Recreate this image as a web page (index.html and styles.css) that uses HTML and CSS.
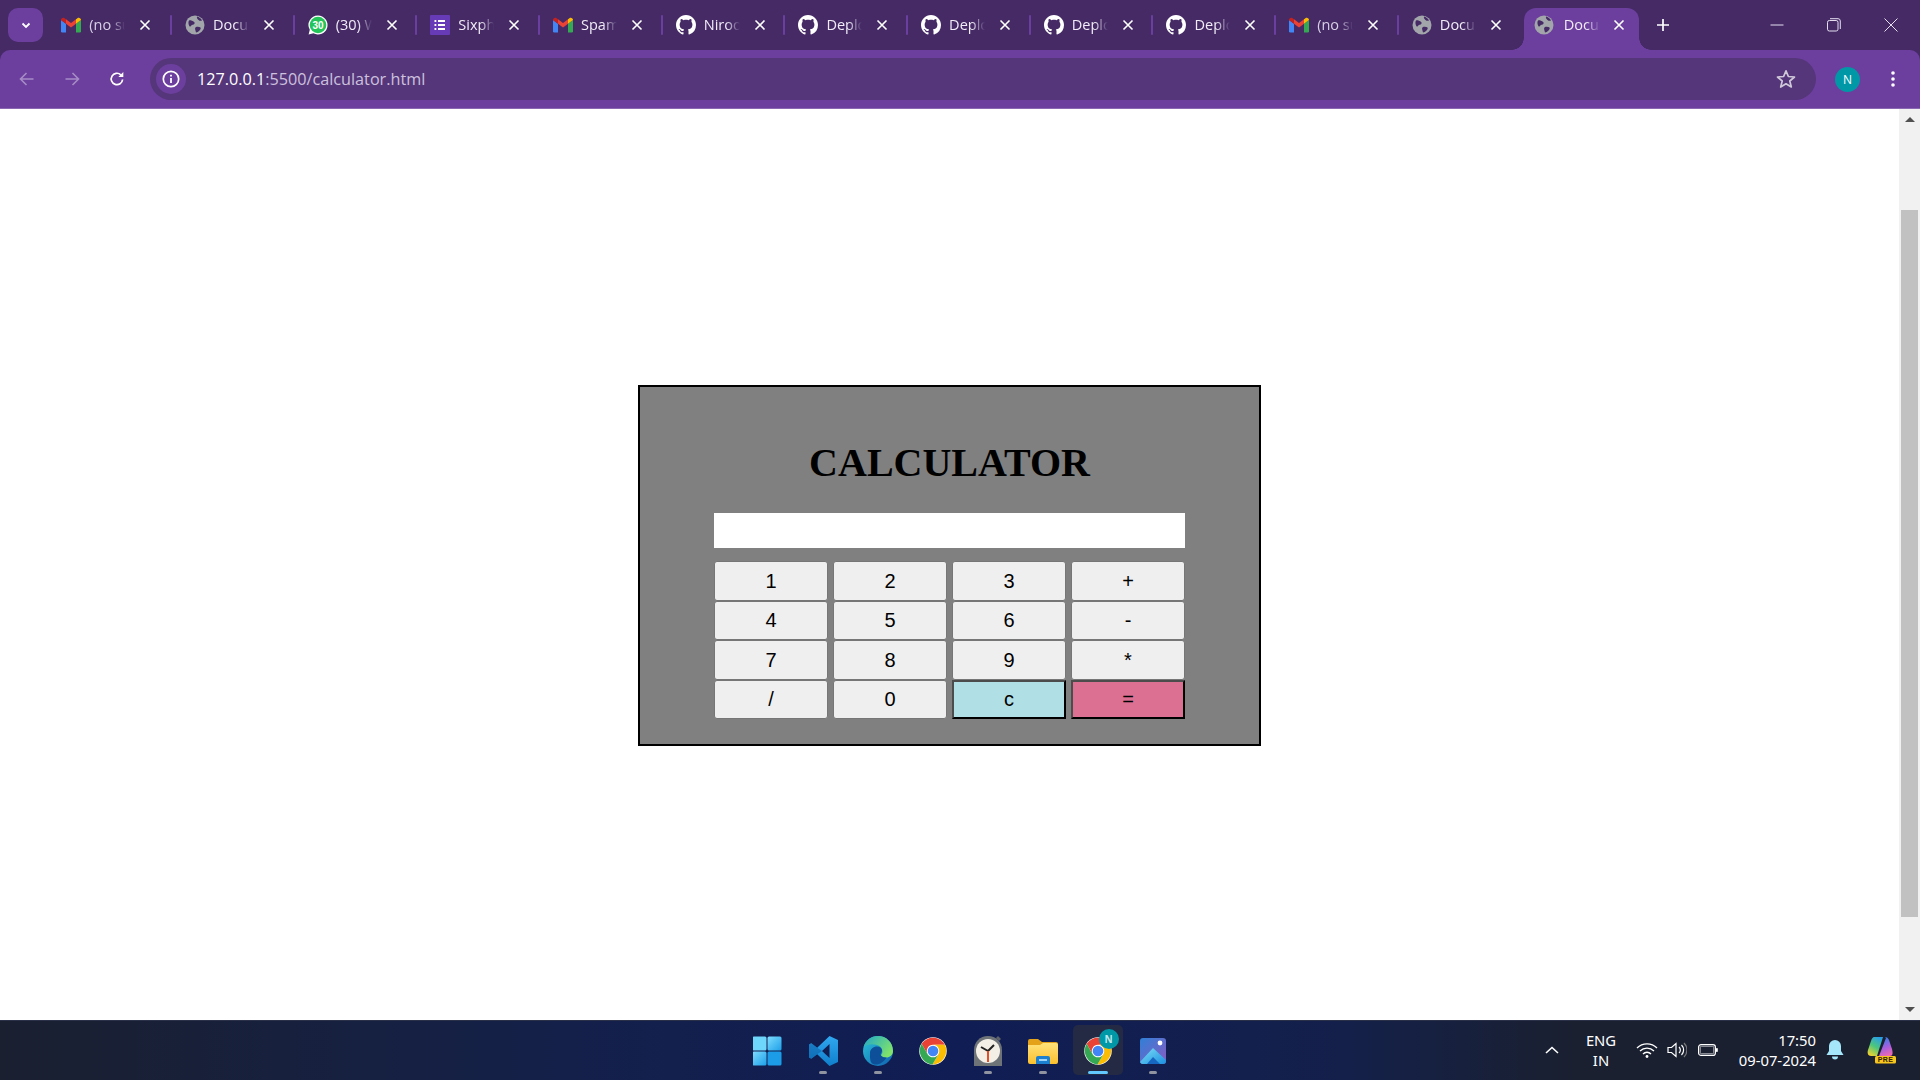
FILE: index.html
```html
<!DOCTYPE html>
<html lang="en">
<head>
<meta charset="utf-8">
<title>Document</title>
<link rel="stylesheet" href="styles.css">
</head>
<body>
<svg class="sprite" aria-hidden="true">
  <defs>
    <linearGradient id="vsg" x1="0" y1="0" x2="0" y2="1"><stop offset="0" stop-color="#31a8f0"/><stop offset="1" stop-color="#0f7fcc"/></linearGradient>
    <linearGradient id="wing" x1="0" y1="0" x2="1" y2="1"><stop offset="0" stop-color="#7ddcff"/><stop offset="1" stop-color="#1da0e8"/></linearGradient>
    <linearGradient id="edg" x1="0" y1="0" x2="1" y2="1"><stop offset="0" stop-color="#2bc4d8"/><stop offset="1" stop-color="#0f5fb0"/></linearGradient>
    <linearGradient id="edg2" x1="0" y1="0" x2="1" y2="0.6"><stop offset="0" stop-color="#1fa6c9"/><stop offset="1" stop-color="#7fe36b"/></linearGradient>
    <linearGradient id="folg" x1="0" y1="0" x2="0" y2="1"><stop offset="0" stop-color="#ffe27a"/><stop offset="1" stop-color="#fcc02e"/></linearGradient>
    <linearGradient id="phog" x1="0" y1="0" x2="1" y2="1"><stop offset="0" stop-color="#2f80d8"/><stop offset="1" stop-color="#8a5bc0"/></linearGradient>
    <linearGradient id="mtg" x1="0" y1="0" x2="1" y2="1"><stop offset="0" stop-color="#7fe0f8"/><stop offset="1" stop-color="#1b8fe0"/></linearGradient>
    <linearGradient id="cop1" x1="0.2" y1="1" x2="0.7" y2="0"><stop offset="0" stop-color="#f4d22e"/><stop offset="0.5" stop-color="#4cc77c"/><stop offset="1" stop-color="#2a9fe6"/></linearGradient>
    <linearGradient id="cop2" x1="0.4" y1="0" x2="0.7" y2="1"><stop offset="0" stop-color="#2f7fe8"/><stop offset="0.55" stop-color="#a85fdc"/><stop offset="1" stop-color="#f06ab0"/></linearGradient>
    <symbol id="gm" viewBox="0 0 24 18">
      <path fill="#4285f4" d="M0 16.5V3l6 4.500V18H1.500A1.500 1.500 0 0 1 0 16.500Z"/>
      <path fill="#34a853" d="M18 18V7.500L24 3v13.500a1.500 1.500 0 0 1-1.500 1.500Z"/>
      <path fill="#ea4335" d="M6 7.500 12 12l6-4.500V2l-6 4.500L6 2Z"/>
      <path fill="#c5221f" d="M0 3C0 .8 2.500-.5 4.300.8L6 2v5.500Z"/>
      <path fill="#fbbc04" d="M18 2 19.700.8C21.500-.5 24 .8 24 3l-6 4.500Z"/>
    </symbol>
    <symbol id="gl" viewBox="0 0 20 20">
      <circle cx="10" cy="10" r="9.500" fill="#a2a6ab"/>
      <path fill="#452a66" d="M4 5.500c2-.5 3 .5 4.500 1 1 .5 1.500 1.500.8 2.500-.8 1-2.300.5-3 1.500-.4 1-1.300 1.500-2 .5C3.500 9.500 3 7 4 5.500ZM12 1.500c2 .5 4 2 5 4-1 .5-2.500.5-3.500-.5-1-.8-2-2-1.500-3.500ZM11 12c1.500-.5 3.500-.3 4.500.5.500 1 0 2-1 3-1 1-2.500 2-3.500 2-.5-1-.3-2-.8-3-.3-1 0-2 .8-2.500Z"/>
    </symbol>
    <symbol id="gh" viewBox="0 0 16 16">
      <path fill="#fff" fill-rule="evenodd" d="M8 0C3.580 0 0 3.580 0 8c0 3.540 2.290 6.530 5.470 7.590.4.070.55-.17.55-.38 0-.19-.01-.82-.01-1.490-2.010.37-2.530-.49-2.690-.94-.09-.23-.48-.94-.82-1.130-.28-.15-.68-.52-.01-.53.63-.01 1.080.58 1.230.82.720 1.210 1.870.87 2.330.66.070-.52.28-.87.51-1.070-1.780-.2-3.640-.89-3.640-3.950 0-.87.31-1.590.82-2.150-.08-.2-.36-1.020.08-2.120 0 0 .67-.21 2.200.82.64-.18 1.320-.27 2-.27.68 0 1.360.09 2 .27 1.530-1.040 2.200-.82 2.200-.82.44 1.100.16 1.920.08 2.120.51.56.82 1.270.82 2.150 0 3.070-1.870 3.750-3.650 3.950.29.25.54.73.54 1.480 0 1.070-.01 1.930-.01 2.200 0 .21.15.46.55.38A8.013 8.013 0 0 0 16 8c0-4.420-3.580-8-8-8z"/>
    </symbol>
    <symbol id="x" viewBox="0 0 12 12">
      <path d="M1.500 1.500l9 9M10.500 1.500l-9 9" stroke="#fff" stroke-width="1.600" fill="none"/>
    </symbol>
    <symbol id="chrome" viewBox="0 0 48 48">
      <circle cx="24" cy="24" r="22" fill="#fff"/>
      <path fill="#ea4335" d="M24 14H43.050A22 22 0 0 0 5.810 12.500L15.340 29A10 10 0 0 1 24 14Z"/>
      <path fill="#fbbc04" d="M32.660 29 23.135 45.500A22 22 0 0 0 43.050 14H24A10 10 0 0 1 32.660 29Z"/>
      <path fill="#34a853" d="M15.340 29 5.810 12.500A22 22 0 0 0 23.135 45.500L32.660 29A10 10 0 0 1 15.340 29Z"/>
      <circle cx="24" cy="24" r="8.500" fill="#4285f4"/>
    </symbol>
  </defs>
</svg>

<header class="browser">
  <div class="tabstrip">
    <div class="tabsearch">
      <svg class="ico12" viewBox="0 0 12 12"><path d="M2.500 4.500 6 8l3.500-3.500" stroke="#fff" stroke-width="1.800" fill="none"/></svg>
    </div>
    <div class="tab first"><span class="sep"></span><svg class="fav gm"><use href="#gm"/></svg><span class="label dim">(no subject)</span><svg class="close"><use href="#x"/></svg></div>
    <div class="tab"><span class="sep"></span><svg class="fav"><use href="#gl"/></svg><span class="label">Document</span><svg class="close"><use href="#x"/></svg></div>
    <div class="tab"><span class="sep"></span>
      <svg class="fav" viewBox="0 0 20 20">
        <path fill="#fff" d="M10 .5a9.500 9.500 0 0 0-8.200 14.300L.6 19.500l4.800-1.200A9.500 9.500 0 1 0 10 .5Z"/>
        <circle cx="10" cy="10" r="8.300" fill="#25c45a"/>
        <text class="wa-num" x="10" y="13.600" text-anchor="middle">30</text>
      </svg>
      <span class="label">(30) WhatsApp</span><svg class="close"><use href="#x"/></svg></div>
    <div class="tab"><span class="sep"></span>
      <svg class="fav" viewBox="0 0 20 20">
        <rect width="20" height="20" rx="1" fill="#673ab7"/>
        <path d="M8 6h7M8 10h7M8 14h7" stroke="#fff" stroke-width="1.800"/>
        <path d="M4.500 6h1.800M4.500 10h1.800M4.500 14h1.800" stroke="#fff" stroke-width="1.800"/>
      </svg>
      <span class="label">Sixphrase</span><svg class="close"><use href="#x"/></svg></div>
    <div class="tab"><span class="sep"></span><svg class="fav gm"><use href="#gm"/></svg><span class="label">Spam</span><svg class="close"><use href="#x"/></svg></div>
    <div class="tab"><span class="sep"></span><svg class="fav"><use href="#gh"/></svg><span class="label">Niroop</span><svg class="close"><use href="#x"/></svg></div>
    <div class="tab"><span class="sep"></span><svg class="fav"><use href="#gh"/></svg><span class="label">Deploy</span><svg class="close"><use href="#x"/></svg></div>
    <div class="tab"><span class="sep"></span><svg class="fav"><use href="#gh"/></svg><span class="label">Deploy</span><svg class="close"><use href="#x"/></svg></div>
    <div class="tab"><span class="sep"></span><svg class="fav"><use href="#gh"/></svg><span class="label">Deploy</span><svg class="close"><use href="#x"/></svg></div>
    <div class="tab"><span class="sep"></span><svg class="fav"><use href="#gh"/></svg><span class="label">Deploy</span><svg class="close"><use href="#x"/></svg></div>
    <div class="tab"><span class="sep"></span><svg class="fav gm"><use href="#gm"/></svg><span class="label dim">(no subject)</span><svg class="close"><use href="#x"/></svg></div>
    <div class="tab"><span class="sep"></span><svg class="fav"><use href="#gl"/></svg><span class="label">Document</span><svg class="close"><use href="#x"/></svg></div>
    <div class="tab active"><svg class="fav"><use href="#gl"/></svg><span class="label">Document</span><svg class="close"><use href="#x"/></svg></div>
    <svg class="newtab" viewBox="0 0 14 14"><path d="M7 1v12M1 7h12" stroke="#fff" stroke-width="1.700"/></svg>
    <div class="winctl">
      <div class="winbtn"><svg class="ico14" viewBox="0 0 14 14"><path d="M.5 7h13" stroke="#e6deef" stroke-width="1"/></svg></div>
      <div class="winbtn"><svg class="ico14" viewBox="0 0 14 14"><rect x=".5" y="2.500" width="10.500" height="10.500" rx="1.800" fill="none" stroke="#e6deef"/><path d="M3 .7h8a2.300 2.300 0 0 1 2.300 2.300v8" fill="none" stroke="#e6deef"/></svg></div>
      <div class="winbtn"><svg class="ico14" viewBox="0 0 14 14"><path d="M.5.500l13 13M13.500.500l-13 13" stroke="#e6deef" stroke-width="1"/></svg></div>
    </div>
  </div>
  <div class="toolbar">
    <svg class="nav back" viewBox="0 0 16 16"><path d="M14.500 8h-13M7.500 2 1.500 8l6 6" stroke="#a68cc6" stroke-width="1.600" fill="none"/></svg>
    <svg class="nav fwd" viewBox="0 0 16 16"><path d="M1.500 8h13M8.500 2l6 6-6 6" stroke="#a68cc6" stroke-width="1.600" fill="none"/></svg>
    <svg class="nav reload" viewBox="0 0 16 16"><path d="M13.600 8.500A5.700 5.700 0 1 1 11.800 3.800" stroke="#fff" stroke-width="1.700" fill="none"/><path d="M14.300 1v5h-5Z" fill="#fff"/></svg>
    <div class="omnibox">
      <div class="chip">
        <svg class="ico18" viewBox="0 0 18 18"><circle cx="9" cy="9" r="7.700" fill="none" stroke="#fff" stroke-width="1.700"/><path d="M9 8v5M9 4.800v1.800" stroke="#fff" stroke-width="1.800"/></svg>
      </div>
      <span class="url"><span class="host">127.0.0.1</span>:5500/calculator.html</span>
      <svg class="star" viewBox="0 0 20 20"><path d="M10 1.800l2.400 5.700 6.100.5-4.700 4 1.500 6-5.300-3.200L4.700 18l1.500-6-4.700-4 6.100-.5Z" fill="none" stroke="#cfc8d8" stroke-width="1.700" stroke-linejoin="round"/></svg>
    </div>
    <div class="avatar">N</div>
    <svg class="kebab" viewBox="0 0 4 18"><circle cx="2" cy="3" r="1.800" fill="#fff"/><circle cx="2" cy="9" r="1.800" fill="#fff"/><circle cx="2" cy="15" r="1.800" fill="#fff"/></svg>
  </div>
</header>

<div class="viewport">
  <main class="page">
    <section class="calc">
      <h1 class="calc-title">CALCULATOR</h1>
      <input class="calc-display" type="text" aria-label="display">
      <div class="keys">
        <button class="key">1</button><button class="key">2</button><button class="key">3</button><button class="key">+</button>
        <button class="key">4</button><button class="key">5</button><button class="key">6</button><button class="key">-</button>
        <button class="key">7</button><button class="key">8</button><button class="key">9</button><button class="key">*</button>
        <button class="key">/</button><button class="key">0</button><button class="key key-clear">c</button><button class="key key-equal">=</button>
      </div>
    </section>
  </main>
  <aside class="scrollbar">
    <div class="sb-arrow"><span class="tri-up"></span></div>
    <div class="sb-track"><div class="sb-thumb"></div></div>
    <div class="sb-arrow"><span class="tri-down"></span></div>
  </aside>
</div>

<footer class="taskbar">
  <div class="tb-side"></div>
  <div class="tb-apps">
    <div class="slot">
      <svg class="appicon" viewBox="0 0 30 30"><rect x="-.5" y=".5" width="14" height="14" rx="1.500" fill="#6fd6fb"/><rect x="14.500" y=".5" width="14" height="14" rx="1.500" fill="url(#wing)"/><rect x="-.5" y="15.500" width="14" height="14" rx="1.500" fill="url(#wing)"/><rect x="14.500" y="15.500" width="14" height="14" rx="1.500" fill="#1c9be6"/></svg>
    </div>
    <div class="slot">
      <svg class="appicon" viewBox="0 0 30 30"><path fill="url(#vsg)" fill-rule="evenodd" d="M21.500 0 30 4v22l-8.500 4L9.200 18.200 3.300 22.800 1 21.500V8.500l2.300-1.300 5.900 4.600ZM21.500 8 14 15l7.500 7Z"/><path fill="#0b5fa5" d="M3.300 7.200 1 8.500v13l2.300 1.300 5.900-4.600L14 15 9.200 11.800Z" opacity=".55"/></svg>
      <span class="pip"></span>
    </div>
    <div class="slot">
      <svg class="appicon" viewBox="0 0 30 30"><circle cx="15" cy="15" r="15" fill="url(#edg)"/><path fill="url(#edg2)" d="M15 0c8 0 15 6 15 15 0 4-3 6.500-7 6.500-3 0-5-1-5-2.500 2-1.500 2-6-1-8.500C12 7 4 8 .6 11 2.500 4.500 8 0 15 0Z"/><path fill="#0e4f9a" d="M7 17c0-4 3.500-6.500 7-6.500 3 0 5 2 5 4 0 1.500-1 2.500-1.500 3.500 0 2.500 3 4 6 3.500-2.500 4.500-7 7.500-12 7-5-1-4.500-6.500-4.500-11.500Z"/></svg>
      <span class="pip"></span>
    </div>
    <div class="slot">
      <svg class="appicon"><use href="#chrome"/></svg>
    </div>
    <div class="slot">
      <svg class="appicon" viewBox="0 0 30 30"><path fill="#5f6368" d="M25 0l3 3-2 2-3-3Z"/><path fill="#6e7378" d="M15 0C7 0 1 6 1 14v16h28V14C29 6 23 0 15 0Z"/><circle cx="15" cy="15" r="12" fill="#f3efe6"/><path d="M15 15 8 11M15 15l6-6" stroke="#222" stroke-width="2" fill="none"/><path d="M15 15v11" stroke="#e0502a" stroke-width="2"/></svg>
      <span class="pip"></span>
    </div>
    <div class="slot">
      <svg class="appicon" viewBox="0 0 30 30"><path fill="#e3a21a" d="M0 5a2 2 0 0 1 2-2h8l4 3h14a2 2 0 0 1 2 2v4H0Z"/><path fill="url(#folg)" d="M0 9h12l3-2h13a2 2 0 0 1 2 2v17a2 2 0 0 1-2 2H2a2 2 0 0 1-2-2Z"/><path fill="#1c7fd0" d="M8 28v-6a2 2 0 0 1 2-2h10a2 2 0 0 1 2 2v6Z"/><rect x="11" y="23" width="8" height="2" fill="#9fd4f8"/></svg>
      <span class="pip"></span>
    </div>
    <div class="slot active">
      <span class="app-wrap">
        <svg class="appicon"><use href="#chrome"/></svg>
        <span class="badge">N</span>
      </span>
      <span class="pip pip-on"></span>
    </div>
    <div class="slot">
      <svg class="appicon photos" viewBox="0 0 26 26"><rect width="26" height="26" rx="3" fill="url(#phog)"/><circle cx="20" cy="5" r="2.400" fill="#fff"/><path fill="url(#mtg)" d="M0 24 13 10l13 12v1a3 3 0 0 1-3 3H3a3 3 0 0 1-3-2Z"/><path fill="#1766c0" d="M7 26l6-7 7 7Z"/></svg>
      <span class="pip"></span>
    </div>
  </div>
  <div class="tray">
    <svg class="t-chev" viewBox="0 0 14 8"><path d="M1 7l6-5.500L13 7" stroke="#fff" stroke-width="1.600" fill="none"/></svg>
    <div class="t-lang"><span>ENG</span><span>IN</span></div>
    <svg class="t-wifi" viewBox="0 0 22 16"><path d="M1 6a14 14 0 0 1 20 0M4 9a10 10 0 0 1 14 0M7 12a5.500 5.500 0 0 1 8 0" stroke="#fff" stroke-width="1.300" fill="none"/><circle cx="11" cy="14.500" r="1.400" fill="#fff"/></svg>
    <svg class="t-vol" viewBox="0 0 20 16"><path d="M1 5.500h3.500L9 1.500v13l-4.500-4H1Z" fill="none" stroke="#fff" stroke-width="1.200"/><path d="M12 5a4 4 0 0 1 0 6M14.500 3a7 7 0 0 1 0 10" stroke="#fff" stroke-width="1.200" fill="none"/><path d="M17 1a10 10 0 0 1 0 14" stroke="#777" stroke-width="1.200" fill="none"/></svg>
    <svg class="t-bat" viewBox="0 0 20 12"><rect x=".6" y=".6" width="16.800" height="10.800" rx="2.500" fill="none" stroke="#fff" stroke-width="1.200"/><rect x="2.300" y="2.300" width="13.400" height="7.400" rx="1" fill="none" stroke="#fff" stroke-width=".6"/><rect x="18" y="4" width="1.800" height="4" rx=".8" fill="#fff"/></svg>
    <div class="t-clock"><span>17:50</span><span>09-07-2024</span></div>
    <svg class="t-bell" viewBox="0 0 18 20"><path d="M9 0a6 6 0 0 1 6 6v5l2.500 4H.5L3 11V6a6 6 0 0 1 6-6Z" fill="#a5e6fb"/><path d="M6 16.500h6a3 3 0 0 1-6 0Z" fill="#a5e6fb"/></svg>
    <svg class="t-copilot" viewBox="0 0 30 28">
      <path fill="url(#cop1)" d="M8 1h9l-6 19H5c-3 0-4-3-3-6l3-9c1-3 2-4 3-4Z"/>
      <path fill="url(#cop2)" d="M19 1c2 0 3 1 4 3l3 9c1 4 1 7-2 7H13l7-18Z"/>
      <rect x="9" y="20" width="21" height="7.500" rx="1.500" fill="#f8c51c"/>
      <text class="pre" x="19.500" y="26.300" text-anchor="middle">PRE</text>
    </svg>
  </div>
</footer>
</body>
</html>
```

FILE: styles.css
```css
* { box-sizing: border-box; }
html, body { margin: 0; height: 100%; }
body {
  width: 1920px;
  height: 1080px;
  overflow: hidden;
  display: flex;
  flex-direction: column;
  background: #452a66;
  font-family: "Open Sans", "Noto Sans", sans-serif;
}
.sprite { display: block; width: 0; height: 0; overflow: hidden; }

/* ---------- tab strip ---------- */
.browser { flex: 0 0 109px; display: flex; flex-direction: column; }
.tabstrip {
  flex: 0 0 50px;
  display: flex;
  align-items: flex-start;
  padding: 8px 0 0 8px;
}
.tabsearch {
  width: 35px;
  height: 34px;
  border-radius: 10px;
  background: #6c3f9e;
  display: flex;
  align-items: center;
  justify-content: center;
  margin-right: 4.3px;
}
.ico12 { width: 12px; height: 12px; }
.ico14 { width: 14px; height: 14px; }
.ico18 { width: 18px; height: 18px; }

.tab {
  position: relative;
  flex: 0 0 122.7px;
  height: 42px;
  padding-bottom: 8px;
  display: flex;
  align-items: center;
}
.sep { width: 2px; height: 20px; background: #6b3fa0; margin-right: 13px; border-radius: 1px; }
.first .sep { visibility: hidden; margin-right: 12px; }
.fav { flex: 0 0 20px; width: 20px; height: 20px; }
.fav.gm { height: 16px; }
.label {
  width: 36px;
  margin-left: 8px;
  overflow: hidden;
  white-space: nowrap;
  font-size: 14.500px;
  line-height: 20px;
  color: #f1ecf6;
  -webkit-mask-image: linear-gradient(to right, #000 62%, transparent 100%);
  mask-image: linear-gradient(to right, #000 62%, transparent 100%);
}
.label.dim { color: #d8cfe4; }
.close { flex: 0 0 12px; width: 12px; height: 12px; margin-left: 14px; }
.wa-num { font: 700 10px "Liberation Sans", sans-serif; fill: #fff; }

.tab.active {
  flex: 0 0 115px;
  margin-left: 4.300px;
  background: #6c3f9e;
  border-radius: 12px 12px 0 0;
}
.tab.active .fav { margin-left: 10px; }
.tab.active .label { margin-left: 10px; }
.tab.active .close { margin-left: 13px; }
.tab.active::before,
.tab.active::after {
  content: "";
  position: absolute;
  bottom: 0;
  width: 12px;
  height: 12px;
}
.tab.active::before {
  left: -12px;
  background: radial-gradient(circle at 0 0, transparent 11.500px, #6c3f9e 12px);
}
.tab.active::after {
  right: -12px;
  background: radial-gradient(circle at 100% 0, transparent 11.500px, #6c3f9e 12px);
}
.newtab { width: 14px; height: 14px; margin: 10px 0 0 17px; }
.winctl { margin: -8px 0 0 auto; padding-right: 1px; display: flex; height: 50px; }
.winbtn { width: 57px; display: flex; align-items: center; justify-content: center; }

/* ---------- toolbar ---------- */
.toolbar {
  flex: 0 0 59px;
  display: flex;
  align-items: center;
  background: #6c3f9e;
  border-bottom: 1px solid #8a68b2;
  border-radius: 10px 10px 0 0;
}
.nav { width: 16px; height: 16px; flex: none; }
.back { margin-left: 19px; }
.fwd { margin-left: 29px; }
.reload { margin-left: 29px; }
.omnibox {
  flex: 1;
  height: 42px;
  margin-left: 25px;
  display: flex;
  align-items: center;
  padding: 0 20px 0 6px;
  background: #55367a;
  border-radius: 21px;
}
.chip {
  width: 30px;
  height: 30px;
  border-radius: 50%;
  background: #6c3f9e;
  display: flex;
  align-items: center;
  justify-content: center;
}
.url { margin-left: 11px; font-size: 16.200px; color: #cdc1de; white-space: nowrap; }
.host { color: #fff; }
.star { width: 20px; height: 20px; margin-left: auto; }
.avatar {
  width: 25px;
  height: 25px;
  margin-left: 19.500px;
  border-radius: 50%;
  background: #0097a7;
  color: #fff;
  font-size: 12px;
  display: flex;
  align-items: center;
  justify-content: center;
}
.kebab { width: 4px; height: 18px; margin: 0 25.500px 0 30.500px; flex: none; }

/* ---------- page ---------- */
.viewport { flex: 1; display: flex; min-height: 0; background: #fff; }
.page {
  flex: 1;
  display: flex;
  justify-content: center;
  align-items: flex-start;
  padding-top: 276px;
}
.calc {
  width: 623px;
  height: 361px;
  border: 2px solid #000;
  background: #808080;
  display: flex;
  flex-direction: column;
  align-items: center;
}
.calc-title {
  margin: 53px 0 27px;
  font: 700 40px/46px "Liberation Serif", serif;
  color: #000;
}
.calc-display {
  width: 471px;
  height: 35px;
  border: 0;
  padding: 0;
  background: #fff;
}
.keys {
  width: 471px;
  margin-top: 13px;
  display: grid;
  grid-template-columns: repeat(4, 114px);
  grid-template-rows: 40px 39px 40px 39px;
  column-gap: 5px;
}
.key {
  margin: 0;
  padding: 0;
  border: 1px solid #767676;
  border-radius: 3px;
  background: #efefef;
  color: #000;
  font: 20px "Liberation Sans", sans-serif;
}
.key-clear, .key-equal {
  border: 2px solid;
  border-color: #4c4c4c #000 #000 #4c4c4c;
  border-radius: 0;
}
.key-clear { background: #b0e0e6; }
.key-equal { background: #db7093; }

/* ---------- scrollbar ---------- */
.scrollbar {
  flex: 0 0 21px;
  display: flex;
  flex-direction: column;
  background: #f1f1f1;
}
.sb-arrow { flex: 0 0 21px; display: flex; align-items: center; justify-content: center; }
.tri-up, .tri-down { width: 0; height: 0; border-left: 5px solid transparent; border-right: 5px solid transparent; }
.tri-up { border-bottom: 5px solid #505050; }
.tri-down { border-top: 5px solid #505050; }
.sb-track { flex: 1; padding: 80px 2px 82px; display: flex; }
.sb-thumb { flex: 1; background: #c1c1c1; }

/* ---------- taskbar ---------- */
.taskbar {
  flex: 0 0 60px;
  display: grid;
  grid-template-columns: 1fr auto 1fr;
  background: linear-gradient(to right, #1a2030 0%, #14204a 30%, #101d55 50%, #14204a 70%, #1a2030 82%);
  border-top: 1px solid #2a3048;
  color: #fff;
  font-family: "Noto Sans", sans-serif;
}
.tb-apps { display: flex; gap: 5px; margin-top: 4px; }
.slot {
  width: 50px;
  height: 50px;
  padding-top: 11px;
  display: flex;
  flex-direction: column;
  align-items: center;
  gap: 5px;
  border-radius: 5px;
}
.slot.active { background: #242a44; }
.appicon { display: block; flex: 0 0 30px; width: 30px; height: 30px; }
.appicon.photos { width: 26px; }
.app-wrap { position: relative; display: block; width: 30px; height: 30px; flex: none; }
.badge {
  position: absolute;
  left: 16px;
  top: -7px;
  width: 20px;
  height: 20px;
  border-radius: 50%;
  background: #0097a7;
  color: #bfe8ee;
  font: 700 10px/20px "Noto Sans", sans-serif;
  text-align: center;
}
.pip { width: 8px; height: 3px; border-radius: 2px; background: #8f94a0; flex: none; }
.pip-on { width: 20px; background: #62c8ff; }

.tray { display: flex; align-items: center; justify-content: flex-end; padding: 0 24px 2px 0; }
.t-chev { width: 14px; height: 8px; margin-right: 22px; }
.t-lang, .t-clock { display: flex; flex-direction: column; font-size: 14.800px; line-height: 20px; }
.t-lang { width: 40px; align-items: center; margin-right: 15px; }
.t-wifi { width: 22px; height: 16px; margin-right: 9px; }
.t-vol { width: 20px; height: 16px; margin-right: 11px; }
.t-bat { width: 20px; height: 12px; margin-right: 10px; }
.t-clock { width: 88px; align-items: flex-end; margin-right: 10px; }
.t-bell { width: 18px; height: 20px; margin-right: 22px; }
.t-copilot { width: 30px; height: 28px; }
.pre { font: 700 7px "Liberation Sans", sans-serif; fill: #2a2000; letter-spacing: .3px; }
```
